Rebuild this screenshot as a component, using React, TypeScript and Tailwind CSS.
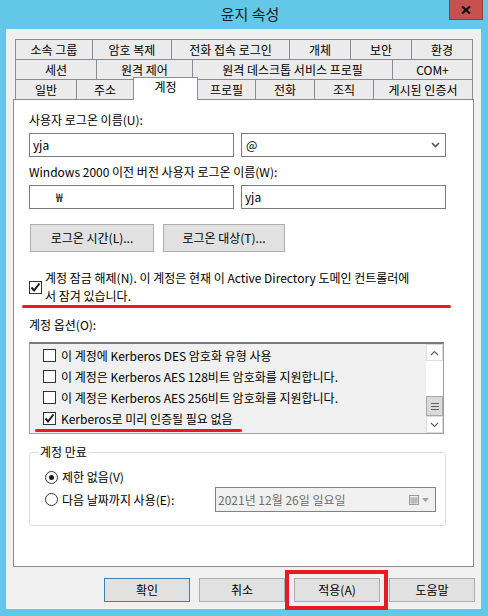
import React from "react";

const row1 = [
  { l: "소속 그룹", w: "w-[78px]" },
  { l: "암호 복제", w: "w-[80px]" },
  { l: "전화 접속 로그인", w: "w-[119px]" },
  { l: "개체", w: "w-[62px]" },
  { l: "보안", w: "w-[62px]" },
  { l: "환경", w: "w-[62px]" },
];
const row2 = [
  { l: "세션", w: "w-[82px]" },
  { l: "원격 제어", w: "w-[97px]" },
  { l: "원격 데스크톱 서비스 프로필", w: "w-[201px]" },
  { l: "COM+", w: "w-[81px]" },
];
const row3 = [
  { l: "일반", w: "w-[62px]" },
  { l: "주소", w: "w-[58px]" },
  { l: "계정", w: "w-[65px]", sel: true },
  { l: "프로필", w: "w-[59px]" },
  { l: "전화", w: "w-[60px]" },
  { l: "조직", w: "w-[60px]" },
  { l: "게시된 인증서", w: "w-[100px]" },
];

function Tab({ l, w, sel, first }: { l: string; w: string; sel?: boolean; first?: boolean }) {
  if (sel) {
    return (
      <div
        className={`${w} -ml-px -mt-[2px] h-[23px] relative z-10 border border-b-0 border-[#898c95] bg-white flex items-start justify-center pt-[1px] leading-[16px]`}
      >
        {l}
      </div>
    );
  }
  return (
    <div
      className={`${w} ${first ? "" : "-ml-px"} h-[20px] border border-b-0 border-[#898c95] bg-[#ebebeb] flex items-center justify-center leading-[16px]`}
    >
      {l}
    </div>
  );
}

function Check({ checked }: { checked?: boolean }) {
  return (
    <div className="w-[13px] h-[13px] border border-[#333333] bg-white flex items-center justify-center shrink-0">
      {checked && (
        <svg width="11" height="11" viewBox="0 0 11 11">
          <path d="M1.5 5.5 L4 8.5 L9.5 1.5" stroke="#1a1a1a" strokeWidth="2" fill="none" />
        </svg>
      )}
    </div>
  );
}

function Radio({ checked }: { checked?: boolean }) {
  return (
    <div className="w-[13px] h-[13px] rounded-full border border-[#333333] bg-white flex items-center justify-center shrink-0">
      {checked && <div className="w-[5px] h-[5px] rounded-full bg-[#1a1a1a]" />}
    </div>
  );
}

function Btn({ children, w, def }: { children: React.ReactNode; w: string; def?: boolean }) {
  return (
    <div
      className={`${w} flex items-center justify-center bg-[#e1e1e1] border ${def ? "border-[#3c7fb1]" : "border-[#adadad]"}`}
    >
      {children}
    </div>
  );
}

export default function App() {
  return (
    <div className="w-[488px] h-[616px] bg-[#63c8e8] relative overflow-hidden text-[12px] text-black font-['Noto_Sans_CJK_KR','Noto_Sans',sans-serif]">
      {/* Title bar */}
      <div className="h-[29px] flex items-center justify-center text-[15px] text-[#1a1a1a] pl-[12px]">윤지 속성</div>
      <div className="absolute left-[449px] top-0 w-[34px] h-[20px] bg-[#c75050] border border-t-0 border-[#9a3a3a] flex items-center justify-center">
        <svg width="10" height="8" viewBox="0 0 10 8">
          <path d="M1 0.5 L9 7.5 M9 0.5 L1 7.5" stroke="#111" strokeWidth="2.2" />
        </svg>
      </div>

      {/* Client */}
      <div className="ml-[6px] w-[475px] h-[580px] bg-[#f0f0f0] flex flex-col relative">
        {/* Tabs */}
        <div className="ml-[9px] mt-[10px] flex flex-col">
          <div className="flex">
            {row1.map((t, i) => (
              <Tab key={t.l} l={t.l} w={t.w} first={i === 0} />
            ))}
          </div>
          <div className="flex">
            {row2.map((t, i) => (
              <Tab key={t.l} l={t.l} w={t.w} first={i === 0} />
            ))}
          </div>
          <div className="flex h-[20px] items-start">
            {row3.map((t, i) => (
              <Tab key={t.l} l={t.l} w={t.w} sel={t.sel} first={i === 0} />
            ))}
          </div>
        </div>

        {/* Panel */}
        <div className="ml-[7px] w-[461px] h-[468px] border border-[#898c95] bg-white pl-[15px] flex flex-col relative">
          <div className="mt-[12px] leading-[16px]">사용자 로그온 이름(U):</div>
          <div className="mt-[5px] flex gap-[7px]">
            <div className="w-[205px] h-[24px] border border-[#7a7a7a] flex items-center pl-[3px]">yja</div>
            <div className="w-[205px] h-[24px] border border-[#7a7a7a] flex items-center pl-[4px] justify-between pr-[5px]">
              <span>@</span>
              <svg width="9" height="6" viewBox="0 0 9 6">
                <path d="M1 1 L4.5 4.5 L8 1" stroke="#555" strokeWidth="1.6" fill="none" />
              </svg>
            </div>
          </div>
          <div className="mt-[7px] leading-[16px]">Windows 2000 이전 버전 사용자 로그온 이름(W):</div>
          <div className="mt-[5px] flex gap-[7px]">
            <div className="w-[205px] h-[24px] border border-[#7a7a7a] flex items-center pl-[26px]">₩</div>
            <div className="w-[205px] h-[24px] border border-[#7a7a7a] flex items-center pl-[3px]">yja</div>
          </div>
          <div className="mt-[15px] flex gap-[9px] h-[28px] ml-px">
            <Btn w="w-[124px]">로그온 시간(L)...</Btn>
            <Btn w="w-[122px]">로그온 대상(T)...</Btn>
          </div>
          <div className="mt-[17px] flex items-center gap-[3px]">
            <Check checked />
            <div className="leading-[18px] w-[400px]">
              계정 잠금 해제(N). 이 계정은 현재 이 Active Directory 도메인 컨트롤러에
              <br />서 잠겨 있습니다.
            </div>
          </div>
          <div className="mt-[12px] leading-[16px]">계정 옵션(O):</div>
          <div className="mt-[9px] w-[415px] h-[92px] border border-[#a0a0a0] border-t-2 border-t-[#7a7a7a] bg-[#f0f0f0] flex">
            <div className="flex-1 flex flex-col pl-[13px] pt-[1px]">
              {[
                { t: "이 계정에 Kerberos DES 암호화 유형 사용", c: false },
                { t: "이 계정은 Kerberos AES 128비트 암호화를 지원합니다.", c: false },
                { t: "이 계정은 Kerberos AES 256비트 암호화를 지원합니다.", c: false },
                { t: "Kerberos로 미리 인증될 필요 없음", c: true },
              ].map((it) => (
                <div key={it.t} className="h-[21px] flex items-center gap-[5px]">
                  <Check checked={it.c} />
                  <span className="leading-[16px] whitespace-nowrap">{it.t}</span>
                </div>
              ))}
            </div>
            <div className="w-[17px] flex flex-col bg-white">
              <div className="h-[17px] border border-[#dcdcdc] bg-white flex items-center justify-center">
                <svg width="9" height="6" viewBox="0 0 9 6">
                  <path d="M1 5 L4.5 1.5 L8 5" stroke="#606060" strokeWidth="1.2" fill="none" />
                </svg>
              </div>
              <div className="flex-1 bg-white" />
              <div className="h-[20px] border border-[#a8a8a8] bg-[#dadada] flex flex-col items-center justify-center gap-[2px]">
                <div className="w-[8px] h-[1px] bg-[#606060]" />
                <div className="w-[8px] h-[1px] bg-[#606060]" />
                <div className="w-[8px] h-[1px] bg-[#606060]" />
              </div>
              <div className="h-[17px] border border-[#dcdcdc] bg-white flex items-center justify-center">
                <svg width="9" height="6" viewBox="0 0 9 6">
                  <path d="M1 1 L4.5 4.5 L8 1" stroke="#606060" strokeWidth="1.2" fill="none" />
                </svg>
              </div>
            </div>
          </div>
          <fieldset className="mt-[10px] w-[417px] h-[82px] border border-[#dcdcdc] rounded-[3px] pl-[15px]">
            <legend className="ml-[-7px] px-[2px] leading-[16px]">계정 만료</legend>
            <div className="mt-[9px] h-[16px] flex items-center gap-[4px]">
              <Radio checked />
              <span className="leading-[16px]">제한 없음(V)</span>
            </div>
            <div className="mt-[2px] h-[25px] flex items-center">
              <div className="w-[170px] flex items-center gap-[4px]">
                <Radio />
                <span className="leading-[16px]">다음 날짜까지 사용(E):</span>
              </div>
              <div className="w-[221px] h-[25px] border border-[#828282] bg-[#f0f0f0] flex items-center pl-[2px] pr-[6px] justify-between text-[#6d6d6d]">
                <span>2021년 12월 26일 일요일</span>
                <div className="flex items-center gap-[3px]">
                  <svg width="10" height="10" viewBox="0 0 10 10">
                    <rect x="0.5" y="0.5" width="9" height="9" fill="none" stroke="#9a9a9a" />
                    <path d="M0.5 3 H9.5 M0.5 5 H9.5 M0.5 7 H9.5 M3 3 V9.5 M5 3 V9.5 M7 3 V9.5" stroke="#9a9a9a" strokeWidth="0.8" />
                  </svg>
                  <svg width="7" height="4" viewBox="0 0 7 4">
                    <path d="M0 0 H7 L3.5 4 Z" fill="#a0a0a0" />
                  </svg>
                </div>
              </div>
            </div>
          </fieldset>

          {/* Red annotation lines */}
          <div className="absolute left-[8px] top-[205px] w-[429px] h-[3px] rounded-full bg-[#e81b23]" />
          <div className="absolute left-[21px] top-[329px] w-[207px] h-[3px] rounded-full bg-[#e81b23]" />
        </div>

        {/* Bottom buttons */}
        <div className="mt-[11px] ml-[98px] flex gap-[9px] h-[24px]">
          <Btn w="w-[86px]" def>확인</Btn>
          <Btn w="w-[86px]">취소</Btn>
          <Btn w="w-[86px]">적용(A)</Btn>
          <Btn w="w-[86px]">도움말</Btn>
        </div>
        <div className="absolute left-[279px] top-[541px] w-[103px] h-[40px] border-[4px] border-[#e81b23]" />
      </div>
    </div>
  );
}
